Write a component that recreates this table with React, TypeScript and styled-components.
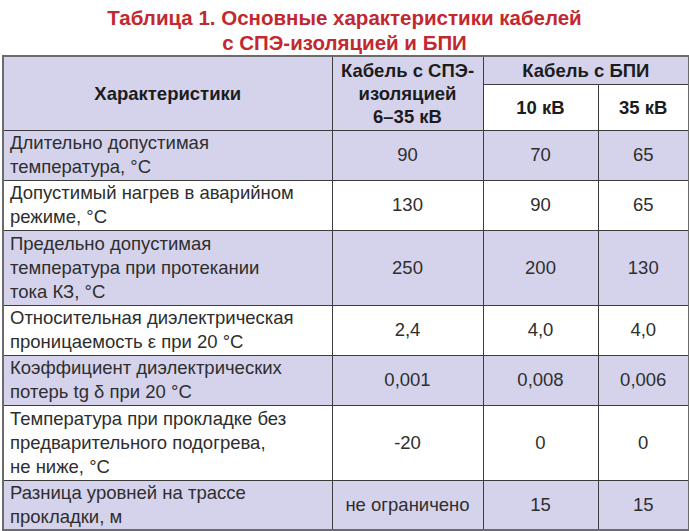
import React from 'react';
import styled, { createGlobalStyle } from 'styled-components';

type Row = {
  label: string[];
  spe: string;
  kv10: string;
  kv35: string;
};

const rows: Row[] = [
  { label: ['Длительно допустимая', 'температура, °С'], spe: '90', kv10: '70', kv35: '65' },
  { label: ['Допустимый нагрев в аварийном', 'режиме, °С'], spe: '130', kv10: '90', kv35: '65' },
  {
    label: ['Предельно допустимая', 'температура при протекании', 'тока КЗ, °С'],
    spe: '250',
    kv10: '200',
    kv35: '130',
  },
  { label: ['Относительная диэлектрическая', 'проницаемость ε при 20 °С'], spe: '2,4', kv10: '4,0', kv35: '4,0' },
  { label: ['Коэффициент диэлектрических', 'потерь tg δ при 20 °С'], spe: '0,001', kv10: '0,008', kv35: '0,006' },
  {
    label: ['Температура при прокладке без', 'предварительного подогрева,', 'не ниже, °С'],
    spe: '-20',
    kv10: '0',
    kv35: '0',
  },
  { label: ['Разница уровней на трассе', 'прокладки, м'], spe: 'не ограничено', kv10: '15', kv35: '15' },
];

const GlobalStyle = createGlobalStyle`
  body {
    margin: 0;
    background: #ffffff;
    font-family: "Liberation Sans", Arial, sans-serif;
  }
`;

const Page = styled.div`
  width: 689px;
  height: 531px;
  overflow: hidden;
  background: #ffffff;
`;

const Title = styled.h1`
  margin: 0;
  padding: 5px 0 0;
  text-align: center;
  color: #c3282f;
  font-size: 20.5px;
  line-height: 25px;
  font-weight: bold;
`;

const Table = styled.table`
  margin-left: 2px;
  width: 686px;
  border-collapse: collapse;
  table-layout: fixed;
  border: 2px solid #6b6b6b;
  color: #2e2e2e;
`;

const HeadRow = styled.tr<{ $height: number }>`
  height: ${(p) => p.$height}px;
`;

const HeadCell = styled.th<{ $light?: boolean }>`
  background: ${(p) => (p.$light ? '#ffffff' : '#d5d3eb')};
  border: 1px solid #3c3c3c;
  font-size: 18.5px;
  line-height: 23px;
  font-weight: bold;
  color: #1c1c1c;
  text-align: center;
  vertical-align: middle;
  padding: 0 4px;
`;

const BodyRow = styled.tr<{ $lines: number }>`
  height: ${(p) => (p.$lines === 3 ? 75 : 50)}px;
`;

const Cell = styled.td<{ $shaded: boolean; $label?: boolean }>`
  background: ${(p) => (p.$shaded ? '#d5d3eb' : '#ffffff')};
  border: 1px solid #3c3c3c;
  font-size: 18.5px;
  line-height: 24px;
  text-align: ${(p) => (p.$label ? 'left' : 'center')};
  vertical-align: middle;
  padding: ${(p) => (p.$label ? '0 4px 0 6px' : '0 2px')};
  white-space: nowrap;
`;

const Line = styled.div`
  height: 24px;
`;

export default function App() {
  return (
    <Page>
      <GlobalStyle />
      <Title>
        Таблица 1. Основные характеристики кабелей
        <br />с СПЭ-изоляцией и БПИ
      </Title>
      <Table>
        <colgroup>
          <col style={{ width: 329 }} />
          <col style={{ width: 151 }} />
          <col style={{ width: 115 }} />
          <col style={{ width: 91 }} />
        </colgroup>
        <thead>
          <HeadRow $height={28}>
            <HeadCell rowSpan={2}>Характеристики</HeadCell>
            <HeadCell rowSpan={2}>
              Кабель с СПЭ-
              <br />
              изоляцией
              <br />
              6–35 кВ
            </HeadCell>
            <HeadCell colSpan={2}>Кабель с БПИ</HeadCell>
          </HeadRow>
          <HeadRow $height={46}>
            <HeadCell $light>10 кВ</HeadCell>
            <HeadCell $light>35 кВ</HeadCell>
          </HeadRow>
        </thead>
        <tbody>
          {rows.map((row, i) => {
            const shaded = i % 2 === 0;
            return (
              <BodyRow key={row.label[0]} $lines={row.label.length}>
                <Cell $shaded={shaded} $label>
                  {row.label.map((l) => (
                    <Line key={l}>{l}</Line>
                  ))}
                </Cell>
                <Cell $shaded={shaded}>{row.spe}</Cell>
                <Cell $shaded={shaded}>{row.kv10}</Cell>
                <Cell $shaded={shaded}>{row.kv35}</Cell>
              </BodyRow>
            );
          })}
        </tbody>
      </Table>
    </Page>
  );
}
